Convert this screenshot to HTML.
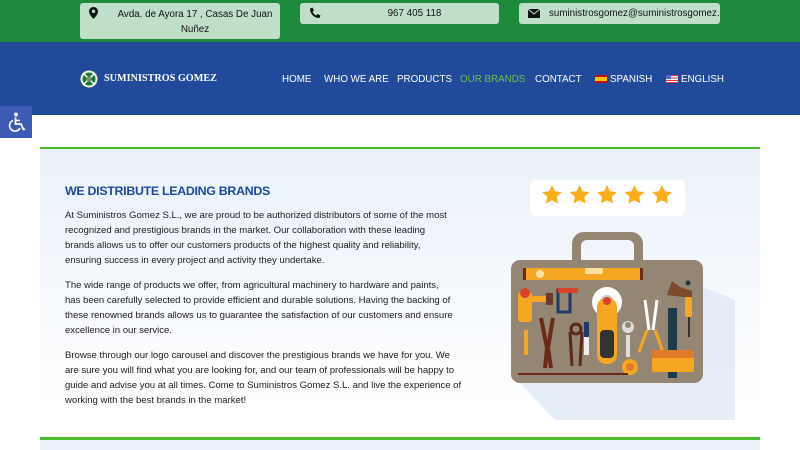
<!DOCTYPE html>
<html><head><meta charset="utf-8"><style>
*{margin:0;padding:0;box-sizing:border-box}
body{width:800px;height:450px;overflow:hidden;background:#fff;font-family:"Liberation Sans",sans-serif;position:relative}
.top{position:absolute;left:0;top:0;width:800px;height:42px;background:#1e8a3c}
.box{position:absolute;background:#bfdfc9;border-radius:3px;font-size:9.8px;color:#111;text-align:center}
.nav{position:absolute;left:0;top:42px;width:800px;height:73px;background:#224a9a}
.nav a{position:absolute;top:32px;color:#fff;font-size:9.8px;letter-spacing:0;text-decoration:none}
.acc{position:absolute;left:0;top:106px;width:32px;height:32px;background:#3d5bb5}
.sec{position:absolute;left:40px;top:147px;width:720px;height:293px;background:linear-gradient(#eaf1fa,#fff 90%);border-top:2px solid #4cbb2c;border-bottom:3px solid #4cbb2c}
h1{position:absolute;left:65px;top:184px;font-size:12.4px;color:#1f4aa0;font-weight:bold;letter-spacing:-.3px}
.p{position:absolute;left:65px;font-size:9.6px;line-height:15px;color:#222;white-space:nowrap;letter-spacing:-.03px}
.below{position:absolute;left:40px;top:440px;width:720px;height:10px;background:#eaf1fa}
</style></head><body>
<div class="top"></div>
<div class="box" style="left:80px;top:3px;width:200px;height:36px;line-height:15px;padding-top:4px;padding-left:30px">Avda. de Ayora 17 , Casas De Juan<br>Nuñez</div>
<svg style="position:absolute;left:89px;top:7px" width="9" height="12" viewBox="0 0 9 12"><path d="M4.5 0C2 0 0 2 0 4.5 0 7.5 4.5 12 4.5 12S9 7.5 9 4.5C9 2 7 0 4.5 0z" fill="#111"/><circle cx="4.5" cy="4.3" r="1.7" fill="#bfdfc9"/></svg>
<div class="box" style="left:300px;top:3px;width:199px;height:21px;line-height:21px;padding-left:30px">967 405 118</div>
<svg style="position:absolute;left:309px;top:7px" width="12" height="12" viewBox="0 0 12 12"><path d="M1 1.5L3.5 0.5 5 3.5 3.5 4.8C4.3 6.5 5.5 7.7 7.2 8.5L8.5 7 11.5 8.5 10.5 11C5 11 1 7 1 1.5z" fill="#111"/></svg>
<div class="box" style="left:519px;top:3px;width:201px;height:21px;line-height:21px;padding-left:30px;overflow:hidden;white-space:nowrap;text-align:left">suministrosgomez@suministrosgomez.c</div>
<svg style="position:absolute;left:528px;top:9px" width="12" height="9" viewBox="0 0 12 9"><rect width="12" height="9" fill="#111"/><path d="M0 0L6 5 12 0" fill="none" stroke="#bfdfc9" stroke-width="1"/></svg>
<div class="nav">
<svg style="position:absolute;left:80px;top:28px" width="18" height="18" viewBox="0 0 18 18"><circle cx="9" cy="9" r="8.5" fill="#f2f2d0"/><circle cx="9" cy="9" r="6.5" fill="#1a7a3a"/><path d="M3 3L15 15M15 3L3 15" stroke="#fff" stroke-width="1.5"/><circle cx="9" cy="9" r="2.5" fill="#8a8a6a"/></svg>
<div style="position:absolute;left:104px;top:31px;color:#fff;font-family:'Liberation Serif',serif;font-weight:bold;font-size:10.2px;letter-spacing:0">SUMINISTROS GOMEZ</div>
<a style="left:282px">HOME</a>
<a style="left:324px">WHO WE ARE</a>
<a style="left:397px">PRODUCTS</a>
<a style="left:460px;color:#6cc04a">OUR BRANDS</a>
<a style="left:535px">CONTACT</a>
<div style="position:absolute;left:595px;top:33px;width:12px;height:8px;background:linear-gradient(#c60b1e 25%,#ffc400 25%,#ffc400 75%,#c60b1e 75%)"></div>
<a style="left:610px">SPANISH</a>
<div style="position:absolute;left:666px;top:33px;width:12px;height:8px;background:repeating-linear-gradient(#d33 0 1.2px,#f4f4f4 1.2px 2.4px)"><div style="width:5px;height:4px;background:#5568b8"></div></div>
<a style="left:681px">ENGLISH</a>
</div>
<div class="acc"><svg width="32" height="32" viewBox="0 0 32 32"><circle cx="16" cy="8.5" r="2" fill="#fff"/><path d="M15.5 11.5V18H21L23.5 23.5 25 23" fill="none" stroke="#fff" stroke-width="1.8"/><path d="M13 14.5A5.5 5.5 0 1 0 20 22" fill="none" stroke="#fff" stroke-width="1.6"/><path d="M15.5 14.5H20" stroke="#fff" stroke-width="1.6"/></svg></div>
<div class="sec"></div>
<div class="below"></div>
<h1>WE DISTRIBUTE LEADING BRANDS</h1>
<div class="p" style="top:208px">At Suministros Gomez S.L., we are proud to be authorized distributors of some of the most<br>recognized and prestigious brands in the market. Our collaboration with these leading<br>brands allows us to offer our customers products of the highest quality and reliability,<br>ensuring success in every project and activity they undertake.</div>
<div class="p" style="top:278px">The wide range of products we offer, from agricultural machinery to hardware and paints,<br>has been carefully selected to provide efficient and durable solutions. Having the backing of<br>these renowned brands allows us to guarantee the satisfaction of our customers and ensure<br>excellence in our service.</div>
<div class="p" style="top:348px">Browse through our logo carousel and discover the prestigious brands we have for you. We<br>are sure you will find what you are looking for, and our team of professionals will be happy to<br>guide and advise you at all times. Come to Suministros Gomez S.L. and live the experience of<br>working with the best brands in the market!</div>
<svg style="position:absolute;left:0;top:0" width="800" height="450" viewBox="0 0 800 450">
<path d="M640 262L735 300V420H555L515 378Z" fill="#dfe9f5" opacity=".8"/>
<rect x="530" y="180" width="155" height="36" rx="6" fill="#fff"/>
<g fill="#f9ae1a">
<path id="s" d="M552 185l3 6.2 6.8.9-5 4.7 1.2 6.7-6-3.2-6 3.2 1.2-6.7-5-4.7 6.8-.9z"/>
<use href="#s" x="27.5"/><use href="#s" x="55"/><use href="#s" x="82.5"/><use href="#s" x="110"/>
</g>
<path d="M572 262V244a12 12 0 0 1 12-12h47a12 12 0 0 1 12 12v18h-9v-16a6 6 0 0 0-6-6h-41a6 6 0 0 0-6 6v16z" fill="#948672"/>
<rect x="511" y="260" width="192" height="123" rx="9" fill="#948672"/>
<rect x="523" y="268" width="120" height="12" fill="#f5a623"/><rect x="523" y="268" width="3" height="12" fill="#6b2a16"/><rect x="640" y="268" width="3" height="12" fill="#6b2a16"/>
<rect x="585" y="268" width="18" height="6" rx="2" fill="#fde3a0"/><circle cx="540" cy="274" r="4" fill="#fde3a0"/>
<path d="M667 295l5-14 8 6 12 4v7z" fill="#7b4b2a"/><circle cx="688" cy="283" r="2.5" fill="#1f3a4a"/>
<rect x="518" y="292" width="14" height="30" rx="3" fill="#f5a623"/><rect x="532" y="296" width="15" height="6" fill="#f5a623"/><rect x="546" y="293" width="7" height="12" fill="#6b3a2a"/><circle cx="525" cy="293" r="5" fill="#d9432b"/>
<rect x="558" y="290" width="12" height="22" fill="none" stroke="#1f3a6a" stroke-width="3"/><rect x="558" y="288" width="20" height="5" fill="#d9432b"/>
<circle cx="607" cy="302" r="15" fill="#fff"/><circle cx="607" cy="302" r="7" fill="#ccc"/>
<rect x="597" y="298" width="20" height="66" rx="9" fill="#f5a623"/><rect x="600" y="330" width="14" height="28" rx="4" fill="#333"/><circle cx="607" cy="301" r="4" fill="#d9432b"/>
<path d="M541 318l6 30-2 20M553 318l-5 30 3 20" stroke="#6b2a16" stroke-width="4" fill="none"/>
<path d="M570 332l2 34M582 332l-2 34" stroke="#5b2a1a" stroke-width="3" fill="none"/><circle cx="576" cy="329" r="5" fill="none" stroke="#5b2a1a" stroke-width="3"/>
<rect x="584" y="322" width="5" height="15" fill="#1f3a6a"/><rect x="584" y="337" width="5" height="18" fill="#eee"/>
<rect x="626" y="335" width="4" height="22" fill="#ddd"/><circle cx="628" cy="327" r="6" fill="#ddd"/><circle cx="628" cy="325" r="3" fill="#948672"/>
<path d="M647 330l-8 22M655 330l8 22" stroke="#f5a623" stroke-width="3"/><path d="M645 300l4 30M657 300l-4 30" stroke="#fff" stroke-width="3"/>
<rect x="668" y="308" width="9" height="70" fill="#1f3a4a"/><rect x="652" y="350" width="42" height="22" rx="2" fill="#f5a623"/><rect x="652" y="350" width="42" height="8" fill="#e07b2a"/>
<rect x="685" y="297" width="7" height="20" rx="2" fill="#f5a623"/><rect x="688" y="317" width="2" height="20" fill="#333"/>
<circle cx="630" cy="367" r="8" fill="#f5a623"/><circle cx="630" cy="367" r="4" fill="#e07b2a"/>
<rect x="524" y="330" width="4" height="25" fill="#f5a623"/>
<rect x="518" y="373" width="110" height="2" fill="#6b2a16"/>
</svg>
</body></html>
